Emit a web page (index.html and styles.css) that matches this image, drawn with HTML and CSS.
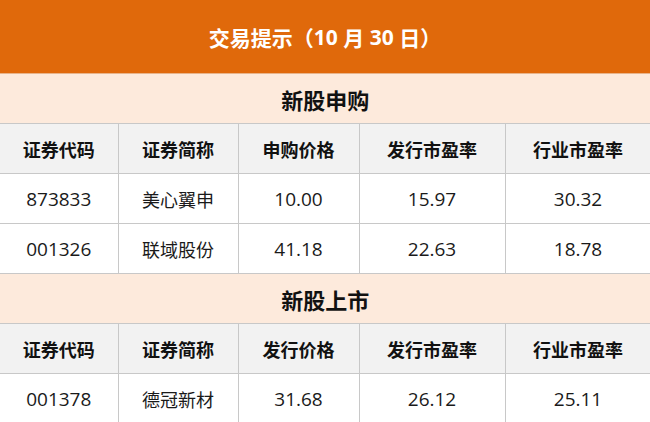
FILE: index.html
```html
<!DOCTYPE html>
<html lang="zh">
<head>
<meta charset="utf-8">
<link rel="stylesheet" href="styles.css">
</head>
<body>
<div class="page">
  <div class="title">交易提示（<span class="tnum">10</span> 月 <span class="tnum">30</span> 日）</div>
  <table class="grid">
    <colgroup>
      <col class="c1"><col class="c2"><col class="c3"><col class="c4"><col class="c5">
    </colgroup>
    <tr class="sec"><td colspan="5">新股申购</td></tr>
    <tr class="head"><td>证券代码</td><td>证券简称</td><td>申购价格</td><td>发行市盈率</td><td>行业市盈率</td></tr>
    <tr class="row"><td class="num">873833</td><td>美心翼申</td><td class="num">10.00</td><td class="num">15.97</td><td class="num">30.32</td></tr>
    <tr class="row"><td class="num">001326</td><td>联域股份</td><td class="num">41.18</td><td class="num">22.63</td><td class="num">18.78</td></tr>
    <tr class="sec"><td colspan="5">新股上市</td></tr>
    <tr class="head"><td>证券代码</td><td>证券简称</td><td>发行价格</td><td>发行市盈率</td><td>行业市盈率</td></tr>
    <tr class="row"><td class="num">001378</td><td>德冠新材</td><td class="num">31.68</td><td class="num">26.12</td><td class="num">25.11</td></tr>
  </table>
</div>
</body>
</html>
```
FILE: styles.css
```css
html, body {
  margin: 0;
  padding: 0;
  background: #ffffff;
}
.page {
  width: 650px;
  height: 422px;
  overflow: hidden;
  font-family: "Open Sans", "Noto Sans CJK SC", sans-serif;
  color: #1a1a1a;
}
.title {
  height: 74px;
  background: #e0690b;
  color: #ffffff;
  font-size: 21px;
  font-weight: 700;
  display: flex;
  align-items: center;
  justify-content: center;
  white-space: pre;
  border-bottom: 1px solid #e8b48a;
  box-sizing: border-box;
}
.tnum {
  font-size: 21px;
}
.grid {
  width: 651px;
  border-collapse: collapse;
  table-layout: fixed;
}
.c1 { width: 118px; }
.c2 { width: 120px; }
.c3 { width: 121px; }
.c4 { width: 146px; }
.c5 { width: 146px; }
.grid td {
  border: 1px solid #c8c8c8;
  text-align: center;
  padding: 0;
  height: 49px;
  font-size: 18px;
}
.grid td.num {
  font-size: 19px;
}
.grid tr:first-child td {
  border-top: none;
}
.grid td:first-child {
  border-left: none;
}
.sec td {
  background: #fdeadc;
  font-size: 22px;
  font-weight: 700;
  color: #111111;
}
.head td {
  background: #f2f2f2;
  font-weight: 700;
  font-size: 18px;
  color: #111111;
}
.row td {
  background: #ffffff;
}
```
